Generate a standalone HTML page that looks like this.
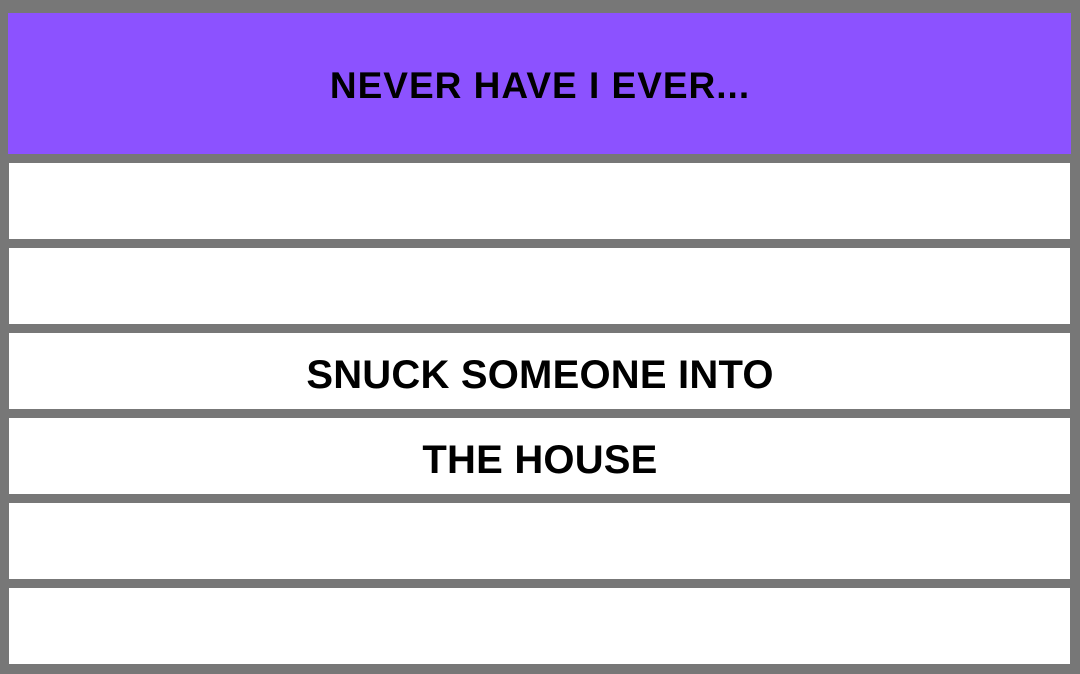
<!DOCTYPE html>
<html><head><style>
html,body{margin:0;padding:0}
body{width:1080px;height:674px;background:#777777;position:relative;overflow:hidden;font-family:"Liberation Sans",sans-serif;font-weight:bold}
.p{position:absolute;left:8px;top:13px;width:1063px;height:141px;background:#8c52ff}
.r{position:absolute;left:9px;width:1061px;height:76px;background:#fff}
.t{position:absolute;left:0;width:1080px;text-align:center;color:#000;white-space:nowrap}
</style></head><body>
<div class="p"></div>
<div class="r" style="top:163px"></div>
<div class="r" style="top:248px"></div>
<div class="r" style="top:333px"></div>
<div class="r" style="top:418px"></div>
<div class="r" style="top:503px"></div>
<div class="r" style="top:588px"></div>
<div class="t" style="top:65px;font-size:37px;letter-spacing:1px">NEVER HAVE I EVER...</div>
<div class="t" style="top:353px;font-size:40px;letter-spacing:0.2px">SNUCK SOMEONE INTO</div>
<div class="t" style="top:438px;font-size:40px;letter-spacing:0.2px">THE HOUSE</div>
</body></html>
